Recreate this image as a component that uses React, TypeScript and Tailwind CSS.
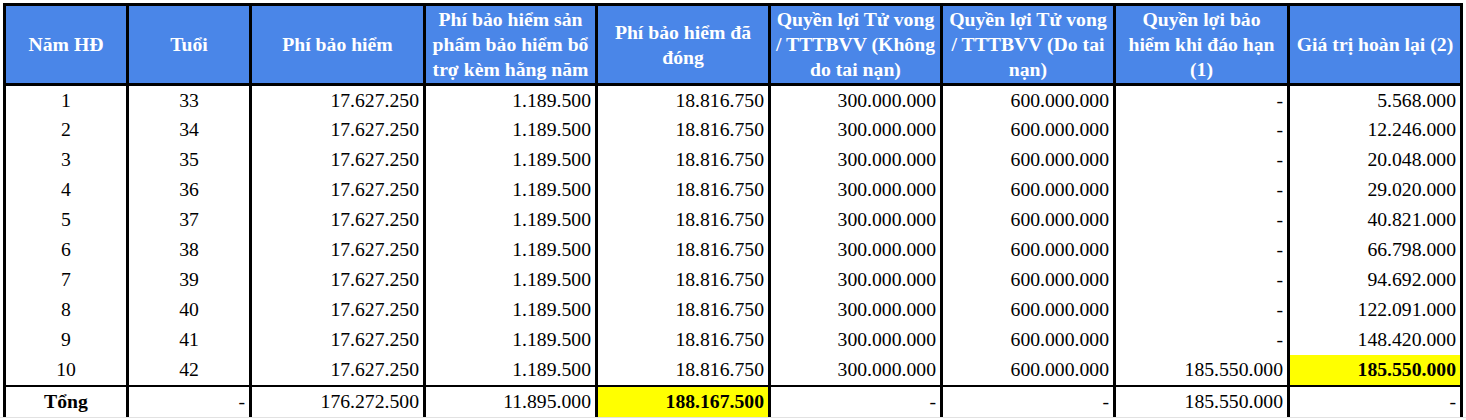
import React from "react";

const COLS = "grid grid-cols-[120px_120px_171px_169px_170px_169px_170px_171px_170px] gap-x-[3px]";

const headers: React.ReactNode[] = [
  "Năm HĐ",
  "Tuổi",
  "Phí bảo hiểm",
  <>Phí bảo hiểm sản<br />phẩm bảo hiểm bổ<br />trợ kèm hằng năm</>,
  <>Phí bảo hiểm đã<br />đóng</>,
  <>Quyền lợi Tử vong<br />/ TTTBVV (Không<br />do tai nạn)</>,
  <>Quyền lợi Tử vong<br />/ TTTBVV (Do tai<br />nạn)</>,
  <>Quyền lợi bảo<br />hiểm khi đáo hạn<br />(1)</>,
  "Giá trị hoàn lại (2)",
];

const refund = [
  "5.568.000",
  "12.246.000",
  "20.048.000",
  "29.020.000",
  "40.821.000",
  "66.798.000",
  "94.692.000",
  "122.091.000",
  "148.420.000",
  "185.550.000",
];

function Cell({
  children,
  center,
  bold,
  yellow,
}: {
  children: React.ReactNode;
  center?: boolean;
  bold?: boolean;
  yellow?: boolean;
}) {
  return (
    <div
      className={
        "flex items-center whitespace-nowrap " +
        (center ? "justify-center " : "justify-end pr-[4px] ") +
        (bold ? "font-bold " : "") +
        (yellow ? "bg-[#ffff00]" : "bg-white")
      }
    >
      {children}
    </div>
  );
}

export default function App() {
  return (
    <div className="w-[1466px] h-[420px] bg-white relative overflow-hidden">
      <div
        className="absolute left-0 right-0 top-[417px] h-px bg-[#e2e2e2]"
      />
      <div
        className="ml-[3px] pt-[3px] w-max"
        style={{ fontFamily: '"Liberation Serif", "Times New Roman", serif' }}
      >
        <div className="bg-black border-[3px] border-black flex flex-col text-[19.7px] text-black">
          <div className={COLS + " h-[77px]"}>
            {headers.map((h, i) => (
              <div
                key={i}
                className="bg-[#4a86e8] text-white font-bold flex items-center justify-center text-center leading-[25px] whitespace-nowrap"
              >
                <span>{h}</span>
              </div>
            ))}
          </div>
          {refund.map((r, i) => (
            <div
              key={i}
              className={
                COLS +
                (i === 0 ? " mt-[3px] h-[28px]" : " mt-px h-[29px]")
              }
            >
              <Cell center>{i + 1}</Cell>
              <Cell center>{33 + i}</Cell>
              <Cell>17.627.250</Cell>
              <Cell>1.189.500</Cell>
              <Cell>18.816.750</Cell>
              <Cell>300.000.000</Cell>
              <Cell>600.000.000</Cell>
              <Cell>{i === 9 ? "185.550.000" : "-"}</Cell>
              <Cell bold={i === 9} yellow={i === 9}>
                {r}
              </Cell>
            </div>
          ))}
          <div className={COLS + " mt-[3px] h-[27px]"}>
            <Cell center bold>
              Tổng
            </Cell>
            <Cell>-</Cell>
            <Cell>176.272.500</Cell>
            <Cell>11.895.000</Cell>
            <Cell bold yellow>
              188.167.500
            </Cell>
            <Cell>-</Cell>
            <Cell>-</Cell>
            <Cell>185.550.000</Cell>
            <Cell>-</Cell>
          </div>
        </div>
      </div>
    </div>
  );
}
